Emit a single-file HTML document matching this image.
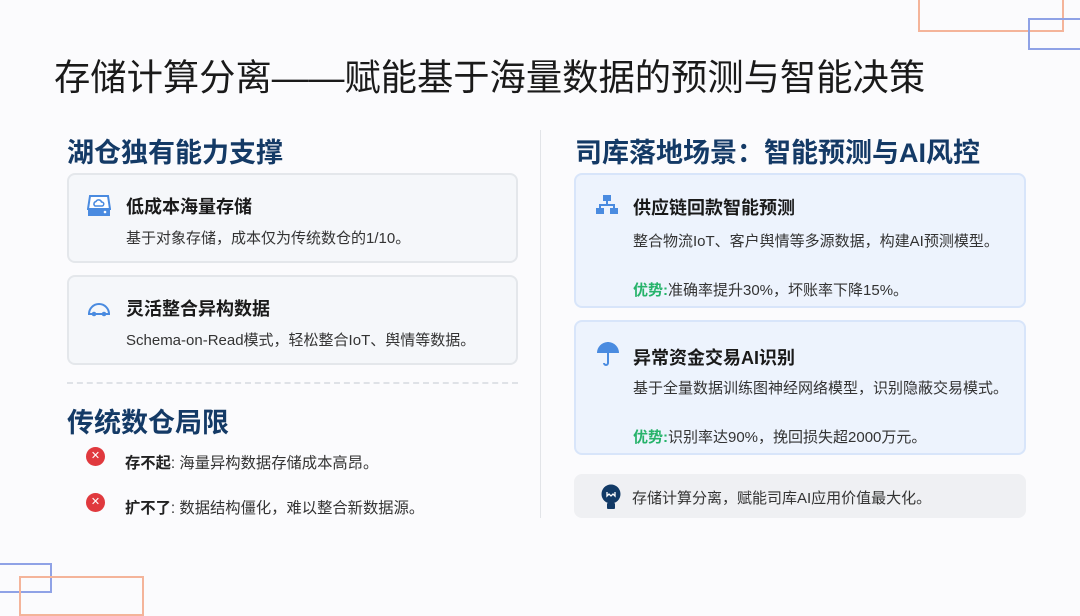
<!DOCTYPE html>
<html><head><meta charset="utf-8"><style>
*{margin:0;padding:0;box-sizing:border-box}
body{width:1080px;height:607px;background:#fbfbfd;position:relative;overflow:hidden;font-family:"Liberation Sans","Noto Sans CJK SC",sans-serif;color:#333}
.abs{position:absolute}
.title{left:54px;top:49px;font-size:36.3px;color:#1a1a1a;white-space:nowrap}
.h{font-size:27px;font-weight:bold;color:#143a66;white-space:nowrap}
.card{position:absolute;border-radius:8px}
.lc{left:67px;width:451px;height:90px;background:#f5f7fa;border:2px solid #e4e7eb}
.rc{left:574px;width:452px;height:135px;background:#edf3fd;border:2px solid #d8e5fa}
.ct{position:absolute;font-size:18px;font-weight:bold;color:#1a1a1a;white-space:nowrap}
.cd{position:absolute;font-size:15px;color:#333;white-space:nowrap}
.g{color:#27b36b;font-weight:bold}
.x{position:absolute;width:19px;height:19px;border-radius:50%;background:#e0393e;color:#fff;font-size:11px;line-height:19px;text-align:center}
.li{position:absolute;font-size:15.3px;color:#333;white-space:nowrap}
.li b{color:#222}
</style></head><body>
<div class="abs" style="left:918px;top:-2px;width:146px;height:34px;border:2px solid #f4b49a"></div>
<div class="abs" style="left:1028px;top:18px;width:60px;height:32px;border:2px solid #8fa2e6"></div>
<div class="abs" style="left:-10px;top:563px;width:62px;height:30px;border:2px solid #8fa2e6"></div>
<div class="abs" style="left:19px;top:576px;width:125px;height:40px;border:2px solid #f4b49a"></div>

<div class="abs title">存储计算分离——赋能基于海量数据的预测与智能决策</div>

<div class="abs h" style="left:67px;top:131px">湖仓独有能力支撑</div>
<div class="card lc" style="top:173px">
 <svg class="abs" style="left:18px;top:20px" width="24" height="22" viewBox="0 0 24 22"><path d="M3 1h18l2 13H1z" fill="#fff" stroke="#4a8be0" stroke-width="2"/><rect x="1" y="13" width="22" height="8" fill="#4a8be0"/><circle cx="18" cy="17" r="1.3" fill="#fff"/><path d="M8 11a2.5 2.5 0 0 1 1-4.5 3 3 0 0 1 5.5 0.5 2 2 0 0 1 0.5 4z" fill="none" stroke="#4a8be0" stroke-width="1.5"/></svg>
 <div class="ct" style="left:57px;top:18px">低成本海量存储</div>
 <div class="cd" style="left:57px;top:52px">基于对象存储，成本仅为传统数仓的1/10。</div>
</div>
<div class="card lc" style="top:275px">
 <svg class="abs" style="left:18px;top:22px" width="24" height="18" viewBox="0 0 24 18"><path d="M2 15A10 10 0 0 1 22 15" fill="none" stroke="#4a8be0" stroke-width="2"/><line x1="1" y1="15" x2="23" y2="15" stroke="#4a8be0" stroke-width="2"/><circle cx="7" cy="15" r="2.3" fill="#4a8be0"/><circle cx="17" cy="15" r="2.3" fill="#4a8be0"/></svg>
 <div class="ct" style="left:57px;top:18px">灵活整合异构数据</div>
 <div class="cd" style="left:57px;top:52px">Schema-on-Read模式，轻松整合IoT、舆情等数据。</div>
</div>
<div class="abs" style="left:67px;top:382px;width:451px;border-top:2px dashed #dfe2e7"></div>
<div class="abs h" style="left:67px;top:401px">传统数仓局限</div>
<div class="x" style="left:86px;top:447px">✕</div>
<div class="li" style="left:125px;top:451px"><b>存不起</b>: 海量异构数据存储成本高昂。</div>
<div class="x" style="left:86px;top:493px">✕</div>
<div class="li" style="left:125px;top:496px"><b>扩不了</b>: 数据结构僵化，难以整合新数据源。</div>

<div class="abs" style="left:540px;top:130px;width:1px;height:388px;background:#e2e4e8"></div>

<div class="abs h" style="left:575px;top:131px">司库落地场景：智能预测与AI风控</div>
<div class="card rc" style="top:173px">
 <svg class="abs" style="left:20px;top:19px" width="22" height="22" viewBox="0 0 22 22"><rect x="7" y="1" width="8" height="6" fill="#4a8be0"/><path d="M11 7v4M4 14v-3h14v3" fill="none" stroke="#4a8be0" stroke-width="2"/><rect x="0" y="14" width="8" height="6" fill="#4a8be0"/><rect x="14" y="14" width="8" height="6" fill="#4a8be0"/></svg>
 <div class="ct" style="left:57px;top:19px">供应链回款智能预测</div>
 <div class="cd" style="left:57px;top:55px">整合物流IoT、客户舆情等多源数据，构建AI预测模型。</div>
 <div class="cd" style="left:57px;top:104px"><span class="g">优势:</span>准确率提升30%，坏账率下降15%。</div>
</div>
<div class="card rc" style="top:320px">
 <svg class="abs" style="left:20px;top:19px" width="24" height="26" viewBox="0 0 24 26"><path d="M1 12A11 11 0 0 1 23 12z" fill="#4a8be0"/><path d="M12 1v1M12 12v10a2 2 0 0 1-4 0" fill="none" stroke="#4a8be0" stroke-width="2"/></svg>
 <div class="ct" style="left:57px;top:22px">异常资金交易AI识别</div>
 <div class="cd" style="left:57px;top:55px">基于全量数据训练图神经网络模型，识别隐蔽交易模式。</div>
 <div class="cd" style="left:57px;top:104px"><span class="g">优势:</span>识别率达90%，挽回损失超2000万元。</div>
</div>
<div class="card" style="left:574px;top:474px;width:452px;height:44px;background:#eff0f3"></div>
<svg class="abs" style="left:601px;top:484px" width="20" height="26" viewBox="0 0 20 26"><circle cx="10" cy="10" r="9.5" fill="#123a66"/><rect x="6" y="19" width="8" height="6" rx="1" fill="#123a66"/><path d="M6 8v4l2-2 2 2 2-2 2 2V8" fill="none" stroke="#fff" stroke-width="1.3"/></svg>
<div class="cd" style="left:632px;top:487px">存储计算分离，赋能司库AI应用价值最大化。</div>
</body></html>
